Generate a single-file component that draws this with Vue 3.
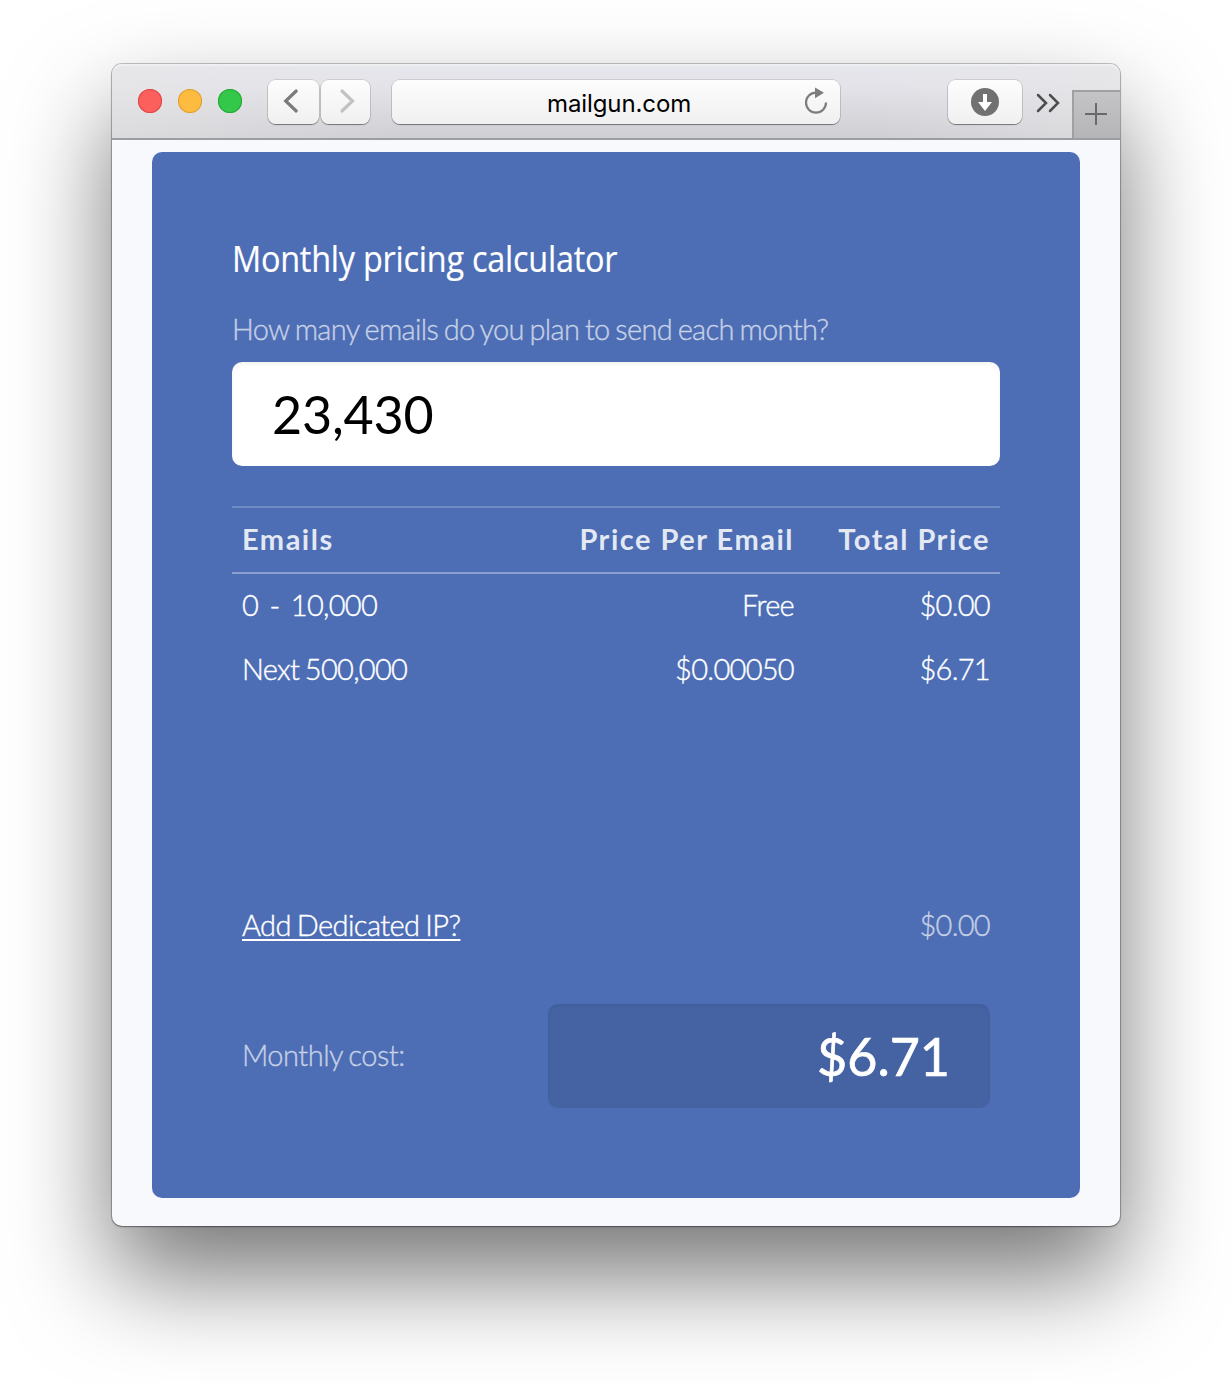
<script setup>
import { ref } from 'vue'

const emails = ref('23,430')
const tiers = [
  { range: '0\u00a0 -\u00a0 10,000', rate: 'Free', total: '$0.00' },
  { range: 'Next 500,000', rate: '$0.00050', total: '$6.71' },
]
</script>

<template>
  <div class="desktop">
    <div class="window">
      <header class="toolbar">
        <div class="lights"><i class="red"></i><i class="yellow"></i><i class="green"></i></div>
        <div class="nav">
          <button class="btn back">
            <svg width="50" height="44" viewBox="0 0 50 44"><path d="M27.2 11 16.7 21 27.2 31" fill="none" stroke="#7b7b7b" stroke-width="3.2" stroke-linecap="round" /></svg>
          </button>
          <button class="btn forward">
            <svg width="48" height="44" viewBox="0 0 48 44"><path d="M20 11 30.5 21 20 31" fill="none" stroke="#c2c2c2" stroke-width="3.2" stroke-linecap="round" /></svg>
          </button>
        </div>
        <div class="address">
          <span>mailgun.com</span>
          <svg width="26" height="30" viewBox="0 0 26 30"><path d="M12 5.6A10 10 0 1 0 22 15.6" fill="none" stroke="#7d7d7d" stroke-width="2.2" /><path d="M11 0.4 20 5.8 11 11.2Z" fill="#7d7d7d" /></svg>
        </div>
        <button class="btn download">
          <svg width="28" height="28" viewBox="0 0 28 28"><circle cx="14" cy="14" r="14" fill="#717171" /><path d="M12 6h4v8h5l-7 9-7-9h5z" fill="#fff" /></svg>
        </button>
        <svg class="more" width="24" height="20" viewBox="0 0 24 20"><path d="M2 2 10 10 2 18M14 2 22 10 14 18" fill="none" stroke="#4d4d50" stroke-width="2.5" stroke-linecap="round" /></svg>
        <div class="newtab">
          <svg width="22" height="22" viewBox="0 0 22 22"><path d="M11 0V22M0 11H22" stroke="#69696b" stroke-width="2" /></svg>
        </div>
      </header>

      <main class="page">
        <section class="card">
          <h1>Monthly pricing calculator</h1>
          <label class="question" for="emails">How many emails do you plan to send each month?</label>
          <input id="emails" v-model="emails" type="text" />

          <div class="table">
            <div class="row head">
              <span>Emails</span><span>Price Per Email</span><span>Total Price</span>
            </div>
            <div v-for="t in tiers" :key="t.range" class="row">
              <span>{{ t.range }}</span><span>{{ t.rate }}</span><span>{{ t.total }}</span>
            </div>
          </div>

          <div class="row addon">
            <a>Add Dedicated IP?</a><span></span><span class="muted">$0.00</span>
          </div>
          <div class="cost">
            <span class="muted">Monthly cost:</span>
            <output>$6.71</output>
          </div>
        </section>
      </main>
    </div>
  </div>
</template>

<style>
body {
  margin: 0;
  background: #fff;
}
</style>

<style scoped>
* {
  box-sizing: border-box;
}
.desktop {
  width: 1232px;
  height: 1386px;
  padding: 64px 112px;
  overflow: hidden;
}
.window {
  height: 1162px;
  border-radius: 10px;
  background: #f7f9fd;
  box-shadow: 0 0 0 1px rgba(0, 0, 0, 0.22), 0 1px 2px rgba(0, 0, 0, 0.3), 0 50px 100px rgba(0, 0, 0, 0.54);
}
.toolbar {
  display: flex;
  align-items: flex-start;
  height: 76px;
  padding-top: 16px;
  border-bottom: 2px solid #9d9ca2;
  border-radius: 10px 10px 0 0;
  background: linear-gradient(90deg, rgba(232, 232, 232, 0.5), rgba(232, 232, 232, 0) 30%, rgba(232, 232, 232, 0) 75%, rgba(232, 232, 232, 0.5)), linear-gradient(#e6e7ec, #e3e3e9 30%, #cfced3);
  box-shadow: inset 0 2px 0 rgba(255, 255, 255, 0.4);
}
.lights {
  display: flex;
  gap: 16px;
  margin: 9px 0 0 26px;
}
.lights i {
  width: 24px;
  height: 24px;
  border-radius: 50%;
}
.red {
  background: #fc605c;
  box-shadow: inset 0 0 0 1px #df4643;
}
.yellow {
  background: #fdbc40;
  box-shadow: inset 0 0 0 1px #dd9f34;
}
.green {
  background: #34c84a;
  box-shadow: inset 0 0 0 1px #24a732;
}
.nav {
  display: flex;
  gap: 2px;
  margin-left: 26px;
}
.btn {
  display: flex;
  align-items: center;
  justify-content: center;
  height: 44px;
  padding: 0;
  border: 0;
  border-radius: 8px;
  background: linear-gradient(#fdfdfd, #f0f0f0);
  box-shadow: 0 0 0 1px rgba(0, 0, 0, 0.11), 0 1px 1px rgba(0, 0, 0, 0.4);
}
.back {
  width: 51px;
}
.forward {
  width: 49px;
}
.address {
  display: flex;
  align-items: center;
  width: 448px;
  height: 44px;
  margin-left: 22px;
  padding-left: 155px;
  border-radius: 8px;
  background: linear-gradient(#fdfdfd, #f0f0f0);
  box-shadow: 0 0 0 1px rgba(0, 0, 0, 0.11), 0 1px 1px rgba(0, 0, 0, 0.4);
  font: 24px/44px Inter, Roboto, sans-serif;
  color: #000;
}
.address span {
  width: 257px;
  padding-top: 4px;
  letter-spacing: -0.1px;
}
.address svg {
  margin-top: -1px;
}
.download {
  width: 74px;
  margin-left: 108px;
}
.more {
  margin: 13px 0 0 14px;
}
.newtab {
  display: flex;
  align-items: center;
  justify-content: center;
  width: 48px;
  height: 48px;
  margin: 10px 0 0 auto;
  padding: 0 2px 2px 0;
  border-left: 2px solid #a0a0a3;
  border-top: 2px solid #a0a0a3;
  background: linear-gradient(#c4c4c6, #b5b5b7);
}
.page {
  padding: 12px 40px 28px;
}
.card {
  height: 1046px;
  padding: 80px;
  border-radius: 10px;
  background: #4d6eb5;
  font: 300 29px/62px Lato, sans-serif;
  letter-spacing: -0.7px;
  word-spacing: -1.5px;
  -webkit-text-stroke: 0.4px;
  color: #fff;
}
h1 {
  height: 56px;
  margin: 0;
  font: 400 36px/54px "Open Sans", sans-serif;
  letter-spacing: -0.25px;
  word-spacing: 0;
  -webkit-text-stroke: 0.2px;
  white-space: nowrap;
  transform: scaleX(0.9);
  transform-origin: left;
}
.question {
  display: block;
  height: 74px;
  padding-top: 19px;
  line-height: 44px;
  letter-spacing: -0.68px;
  color: rgba(255, 255, 255, 0.6);
  white-space: nowrap;
}
input {
  display: block;
  width: 768px;
  height: 104px;
  padding: 0 40px 1px;
  border: 0;
  border-radius: 10px;
  background: #fff;
  box-shadow: inset 0 2px 4px rgba(0, 0, 0, 0.06);
  font: 400 52px Lato, sans-serif;
  letter-spacing: -0.2px;
  -webkit-text-stroke: 0;
  color: #000;
}
.table {
  height: 388px;
  margin-top: 40px;
}
.row {
  display: grid;
  grid-template-columns: 290px 262px 196px;
  height: 64px;
  padding-left: 10px;
  white-space: nowrap;
}
.row span:nth-child(n + 2) {
  text-align: right;
}
.head {
  height: 68px;
  border-top: 2px solid rgba(255, 255, 255, 0.2);
  border-bottom: 2px solid rgba(255, 255, 255, 0.35);
  font-weight: 700;
  letter-spacing: 1.5px;
  word-spacing: 0;
  -webkit-text-stroke: 0;
  color: rgba(255, 255, 255, 0.85);
}
a {
  text-decoration: underline;
  text-decoration-thickness: 2px;
  text-underline-offset: 3px;
  letter-spacing: -0.57px;
}
.muted {
  color: rgba(255, 255, 255, 0.6);
}
.cost {
  display: flex;
  align-items: center;
  justify-content: space-between;
  height: 104px;
  margin: 46px 10px 0;
  letter-spacing: -0.5px;
}
.cost .muted {
  margin-top: -2px;
}
output {
  width: 442px;
  height: 104px;
  padding-right: 40px;
  border-radius: 10px;
  background: #4563a3;
  box-shadow: inset 0 2px 4px rgba(0, 0, 0, 0.05);
  font-size: 52px;
  font-weight: 400;
  line-height: 105px;
  letter-spacing: 0;
  text-align: right;
  -webkit-text-stroke: 0.7px;
}
</style>
